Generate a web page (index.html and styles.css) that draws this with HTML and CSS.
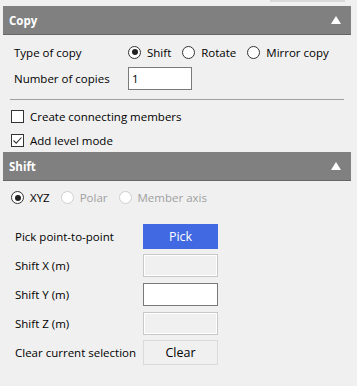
FILE: index.html
```html
<!DOCTYPE html>
<html lang="en">
  <head>
    <meta charset="UTF-8" />
    <meta name="viewport" content="width=device-width, initial-scale=1.0" />
    <title>Copy</title>

    <link rel="stylesheet" href="styles.css">
  </head>
  <body>
    <div class="top-edge"></div>

    <div class="panel-head first">
      <span>Copy</span>
      <span class="arrow"></span>
    </div>

    <div class="section copy-section">
      <div class="row">
        <span class="label">Type of copy</span>
        <div class="radios">
          <span class="radio checked"></span><span class="radio-text">Shift</span>
          <span class="radio"></span><span class="radio-text">Rotate</span>
          <span class="radio"></span><span class="radio-text">Mirror copy</span>
        </div>
      </div>
      <div class="row">
        <span class="label">Number of copies</span>
        <div class="text-box count">1</div>
      </div>
    </div>

    <div class="divider"></div>

    <div class="checks">
      <div class="check-row">
        <span class="check"></span>
        <span>Create connecting members</span>
      </div>
      <div class="check-row">
        <span class="check">
          <svg width="11" height="11" viewBox="0 0 11 11">
            <path d="M1.5 5.5 L4.2 8.2 L9.5 2.5" fill="none" stroke="#333" stroke-width="1.1" />
          </svg>
        </span>
        <span>Add level mode</span>
      </div>
    </div>

    <div class="panel-head">
      <span>Shift</span>
      <span class="arrow"></span>
    </div>

    <div class="mode-row">
      <span class="radio checked"></span><span class="radio-text">XYZ</span>
      <span class="radio disabled"></span><span class="radio-text muted">Polar</span>
      <span class="radio disabled"></span><span class="radio-text muted">Member axis</span>
    </div>

    <div class="form-list">
      <div class="form-row">
        <span class="field-label">Pick point-to-point</span>
        <button class="btn-pick">Pick</button>
      </div>
      <div class="form-row">
        <span class="field-label">Shift X (m)</span>
        <div class="field off"></div>
      </div>
      <div class="form-row">
        <span class="field-label">Shift Y (m)</span>
        <div class="field on"></div>
      </div>
      <div class="form-row">
        <span class="field-label">Shift Z (m)</span>
        <div class="field off"></div>
      </div>
      <div class="form-row">
        <span class="field-label">Clear current selection</span>
        <button class="btn-clear">Clear</button>
      </div>
    </div>
  </body>
</html>
```

FILE: styles.css
```css
body {
  margin: 0;
  background-color: #f0f0f0;
  font-family: "Open Sans", "Noto Sans", sans-serif;
  font-size: 11.5px;
  color: #000;
}

.top-edge {
  width: 75px;
  height: 2px;
  margin-left: 270px;
  background-color: #dadada;
}

.panel-head {
  display: flex;
  align-items: center;
  justify-content: space-between;
  height: 28px;
  margin: 0 6px 0 3px;
  padding: 0 10px 0 6px;
  background-color: #808080;
  border-bottom: 1px solid #666;
  color: white;
  font-weight: bold;
  font-size: 11.5px;
}

.panel-head.first {
  margin-top: 4px;
}

.arrow {
  width: 0;
  height: 0;
  border-left: 5px solid transparent;
  border-right: 5px solid transparent;
  border-bottom: 8px solid white;
}

.copy-section {
  padding: 4px 0 0 14px;
}

.row {
  display: flex;
  align-items: center;
  height: 26px;
}

.label {
  width: 114px;
}

.radios,
.mode-row {
  display: flex;
  align-items: center;
}

.radio {
  width: 11px;
  height: 11px;
  border: 1px solid #333;
  border-radius: 50%;
  background-color: white;
  display: flex;
  align-items: center;
  justify-content: center;
}

.radio.checked::after {
  content: "";
  width: 6px;
  height: 6px;
  border-radius: 50%;
  background-color: #222;
}

.radio.disabled {
  border-color: #cfcfcf;
}

.radio-text {
  margin: 0 11px 0 6px;
}

.muted {
  color: #a0a0a0;
}

.text-box {
  height: 21px;
  line-height: 21px;
  border: 1px solid #7a7a7a;
  background-color: white;
  padding: 0 3px;
  box-sizing: content-box;
}

.count {
  width: 56px;
}

.divider {
  height: 1px;
  margin: 8px 13px 0 10px;
  background-color: #a0a0a0;
}

.checks {
  padding-top: 4px;
}

.check-row {
  display: flex;
  align-items: center;
  height: 24px;
  padding-left: 11px;
}

.check {
  width: 11px;
  height: 11px;
  border: 1px solid #333;
  background-color: white;
  margin-right: 6px;
  display: flex;
  align-items: center;
  justify-content: center;
}

.mode-row {
  height: 33px;
  padding-left: 11px;
}

.form-list {
  padding: 8px 0 0 15px;
}

.form-row {
  display: flex;
  align-items: center;
  height: 29px;
}

.field-label {
  width: 128px;
}

button {
  font-family: inherit;
  font-size: 12.5px;
  width: 75px;
  height: 25px;
  border: 1px solid transparent;
  cursor: pointer;
}

.btn-pick {
  background-color: #4169e1;
  color: white;
  border-color: #4169e1;
}

.btn-clear {
  background-color: #f0f0f0;
  border-color: #dadada;
  color: #000;
}

.field {
  width: 73px;
  height: 21px;
}

.field.off {
  border: 1px solid #c8c8c8;
  background-color: #f0f0f0;
  box-shadow: inset 0 0 0 1px #fff;
}

.field.on {
  border: 1px solid #7a7a7a;
  background-color: white;
}
```
